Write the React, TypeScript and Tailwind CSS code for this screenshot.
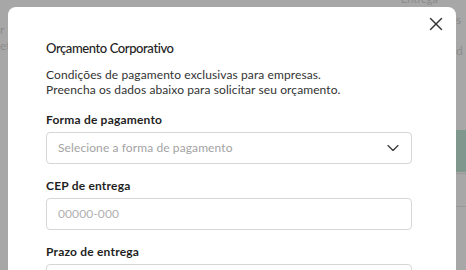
import { X, ChevronDown } from 'lucide-react'

function Field({ label, children }: { label: string; children?: React.ReactNode }) {
  return (
    <div className="flex flex-col gap-[4px]">
      <label className="text-[12px] font-bold leading-[16px] tracking-[0.2px]">{label}</label>
      <div className="flex h-[32px] items-center justify-between rounded-[4px] border border-[#d6d6d6] pl-[11px] pr-[8px]">
        {children}
      </div>
    </div>
  )
}

export default function App() {
  return (
    <div
      className="relative h-[270px] w-[466px] overflow-hidden bg-[#a7a7a7]"
      style={{ fontFamily: 'Lato, "Noto Sans", sans-serif' }}
    >
      {/* faded page behind the overlay */}
      <div className="flex h-full justify-between text-[12px] leading-[15px] text-[#8c8c8c]">
        <div className="flex flex-col gap-[1px] pt-[22px]">
          <span>r</span>
          <span>et</span>
        </div>
        <div className="flex w-[74px] flex-col items-end">
          <span className="-mt-[9px] mr-[28px] text-[11px]">Entrega</span>
          <span className="mt-[6px] w-[10px]">s</span>
          <span className="mt-[16px] w-[10px]">d</span>
          <div className="mt-[72px] h-[42px] w-[10px] bg-[#7f978c]" />
          <div className="mt-[1px] h-px w-[10px] bg-[#989898]" />
          <div className="mt-[32px] h-px w-[10px] bg-[#989898]" />
        </div>
      </div>

      {/* modal */}
      <div className="absolute left-[8px] top-[7px] h-[300px] w-[448px] rounded-lg bg-white pl-[38px] pt-[32px] text-[#1f1f1f]">
        <button className="absolute right-[9px] top-[6px] text-[#333]">
          <X size={22} strokeWidth={1.5} />
        </button>

        <h2 className="text-[13px] font-medium leading-[18px] tracking-[-0.4px] text-[#222]">Orçamento Corporativo</h2>
        <p className="mt-[11px] text-[12px] leading-[14.5px] tracking-[0.1px] text-[#333]">
          Condições de pagamento exclusivas para empresas.
          <br />
          Preencha os dados abaixo para solicitar seu orçamento.
        </p>

        <div className="mt-[15px] flex w-[366px] flex-col gap-[14px]">
          <Field label="Forma de pagamento">
            <span className="text-[12px] tracking-[0.1px] text-[#a3a3a3]">Selecione a forma de pagamento</span>
            <ChevronDown size={20} strokeWidth={1.4} className="text-[#333]" />
          </Field>
          <Field label="CEP de entrega">
            <span className="text-[12px] tracking-[0.1px] text-[#b0b0b0]">00000-000</span>
          </Field>
          <Field label="Prazo de entrega" />
        </div>
      </div>
    </div>
  )
}
